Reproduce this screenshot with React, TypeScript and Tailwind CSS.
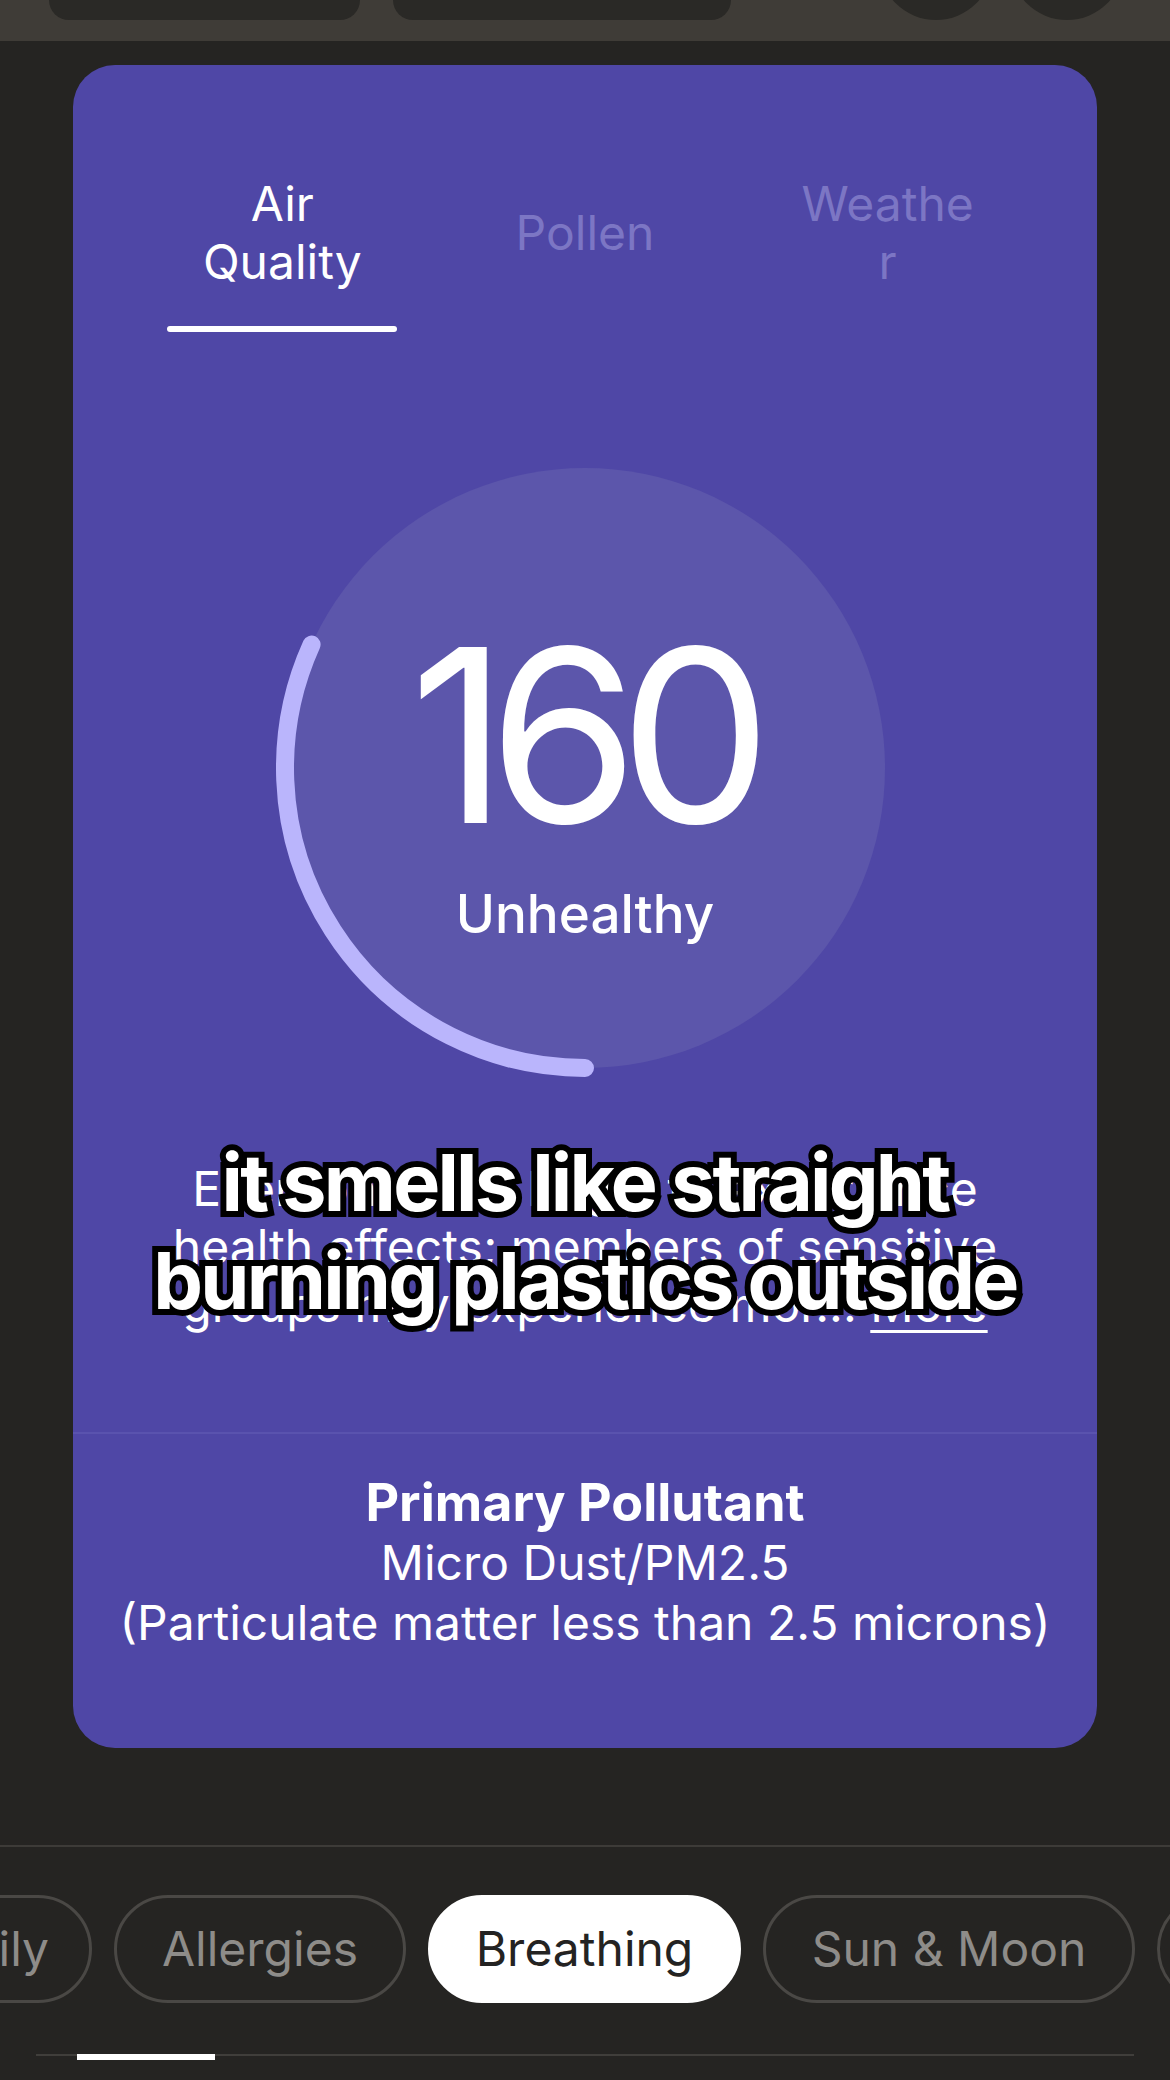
import React from "react";

function Gauge() {
  // arc from bottom (90deg) clockwise to ~204.3deg, radius 300, center 309
  const r = 300;
  const c = 309;
  const a = (204.3 * Math.PI) / 180;
  const ex = c + r * Math.cos(a);
  const ey = c + r * Math.sin(a);
  return (
    <svg
      className="absolute left-[-9px] top-[-9px]"
      width="618"
      height="618"
      viewBox="0 0 618 618"
      fill="none"
    >
      <path
        d={`M ${c} ${c + r} A ${r} ${r} 0 0 1 ${ex.toFixed(2)} ${ey.toFixed(2)}`}
        stroke="#bab5fc"
        strokeWidth="18"
        strokeLinecap="round"
      />
    </svg>
  );
}

function Pill({
  label,
  className,
}: {
  label: string;
  className: string;
}) {
  return (
    <div
      className={
        "shrink-0 h-[108px] rounded-full border-[3px] flex items-center justify-center text-[48px] leading-none whitespace-nowrap " +
        className
      }
    >
      {label}
    </div>
  );
}

export default function App() {
  return (
    <div className="relative w-[1170px] h-[2080px] overflow-hidden bg-[#252422] font-['Inter','Noto_Sans',sans-serif] text-white">
      {/* top bar */}
      <div className="h-[41px] bg-[#3f3c37] overflow-hidden">
        <div className="h-[20px] flex items-end">
          <div className="ml-[49px] w-[311px] h-[80px] shrink-0 rounded-b-[20px] bg-[#2a2926]" />
          <div className="ml-[33px] w-[338px] h-[80px] shrink-0 rounded-b-[20px] bg-[#2a2926]" />
          <div className="ml-[148px] w-[114px] h-[114px] shrink-0 rounded-full bg-[#2a2926]" />
          <div className="ml-[17px] w-[114px] h-[114px] shrink-0 rounded-full bg-[#2a2926]" />
        </div>
      </div>

      {/* card */}
      <div className="relative mt-[24px] mx-[73px] h-[1683px] rounded-[42px] bg-[#4f47a6] flex flex-col">
        {/* tabs */}
        <div className="pt-[110px] px-[58px] grid grid-cols-3">
          <div className="flex flex-col items-center">
            <div className="h-[116px] flex items-center justify-center text-center text-[48px] leading-[58px] text-white">
              <span>
                Air
                <br />
                Quality
              </span>
            </div>
            <div className="mt-[35px] h-[6px] w-[230px] rounded-full bg-white" />
          </div>
          <div className="flex flex-col items-center">
            <div className="h-[116px] flex items-center justify-center text-center text-[48px] leading-[58px] text-[#7c76c4]">
              Pollen
            </div>
            <div className="mt-[35px] h-[6px] w-[230px]" />
          </div>
          <div className="flex flex-col items-center">
            <div className="h-[116px] flex items-center justify-center text-center text-[48px] leading-[58px] text-[#7c76c4]">
              <span>
                Weathe
                <br />r
              </span>
            </div>
            <div className="mt-[35px] h-[6px] w-[230px]" />
          </div>
        </div>

        {/* gauge */}
        <div className="relative mt-[136px] mx-auto w-[600px] h-[600px] shrink-0 rounded-full bg-[#5c56ab] flex flex-col items-center">
          <Gauge />
          <div className="relative pt-[146px] pr-[8px] text-[242px] leading-none tracking-[-0.08em] font-normal">
            160
          </div>
          <div className="relative mt-[32px] text-[53px] leading-none font-medium">
            Unhealthy
          </div>
        </div>

        {/* description */}
        <div className="mt-[92px] text-center text-[48px] leading-[58px] whitespace-nowrap">
          Everyone may begin to experience
          <br />
          health effects; members of sensitive
          <br />
          groups may experience mor...{" "}
          <span className="underline underline-offset-[8px] decoration-[3px]">More</span>
        </div>

        {/* divider */}
        <div className="mt-[98px] h-[2px] bg-[#5a53ae]" />

        {/* pollutant */}
        <div className="pt-[39px] text-center text-[48px] leading-[60px] whitespace-nowrap">
          <div className="font-bold text-[52px]">Primary Pollutant</div>
          <div>Micro Dust/PM2.5</div>
          <div>(Particulate matter less than 2.5 microns)</div>
        </div>

        {/* caption overlay */}
        <div className="absolute left-0 right-0 top-[1068px] text-center text-[79px] leading-[98px] font-bold tracking-[-0.035em] text-white whitespace-nowrap [-webkit-text-stroke:12px_black] [paint-order:stroke_fill]">
          it smells like straight
          <br />
          burning plastics outside
        </div>
      </div>

      {/* bottom divider */}
      <div className="mt-[97px] h-[2px] bg-[#3d3b38]" />

      {/* pills */}
      <div className="mt-[48px] flex gap-[22px] overflow-hidden">
        <Pill label="Daily" className="ml-[-124px] w-[216px] pl-[18px] border-[#4a4845] text-[#8e8c89]" />
        <Pill label="Allergies" className="w-[292px] border-[#4a4845] text-[#8e8c89]" />
        <Pill label="Breathing" className="w-[313px] border-white bg-white text-[#242322]" />
        <Pill label="Sun & Moon" className="w-[372px] border-[#4a4845] text-[#8e8c89]" />
        <Pill label="Wind" className="w-[250px] border-[#4a4845] text-[#8e8c89]" />
      </div>

      {/* bottom indicator */}
      <div className="mt-[51px] mx-[36px] h-[2px] bg-[#403e3b] flex items-start">
        <div className="ml-[41px] w-[138px] h-[6px] shrink-0 bg-white" />
      </div>
    </div>
  );
}
